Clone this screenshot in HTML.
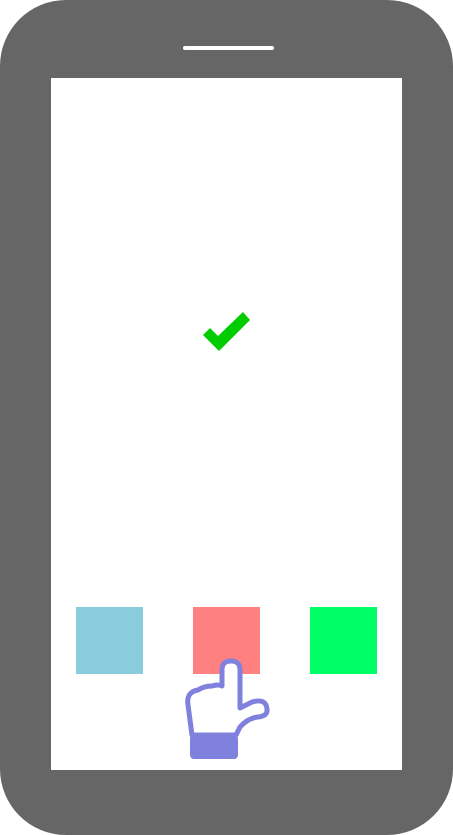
<!DOCTYPE html>
<html><head><style>
html,body{margin:0;padding:0;background:#fff;width:453px;height:835px;overflow:hidden}
</style></head><body>
<svg width="453" height="835" viewBox="0 0 453 835" xmlns="http://www.w3.org/2000/svg" style="display:block">
<rect x="0" y="0" width="453" height="835" rx="66" ry="66" fill="#666666"/>
<rect x="51" y="78" width="351" height="692" fill="#ffffff"/>
<rect x="183" y="46" width="91" height="4" rx="2" fill="#ffffff"/>
<polygon points="203,335 210,328 218,336 243,312 250,320 219,351" fill="#00cc00"/>
<rect x="76" y="607" width="67" height="67" fill="#89cddd"/>
<rect x="193" y="607" width="67" height="67" fill="#ff8080"/>
<rect x="310" y="607" width="67" height="67" fill="#00ff66"/>
<path d="M192 735 L188 705 Q186 692 198 690 Q204 686 212 686 Q218 684 222 686 L222 670 Q222 661 231 661 Q240 661 240 670 L240 708 L252 702 Q266 698 267 709 Q268 716 258 717 Q248 718 240 727 L236 735 Z" fill="#ffffff" stroke="#8080dd" stroke-width="5" stroke-linejoin="round"/>
<rect x="190" y="735" width="48" height="24" rx="4" fill="#8080dd"/>
</svg>
</body></html>
